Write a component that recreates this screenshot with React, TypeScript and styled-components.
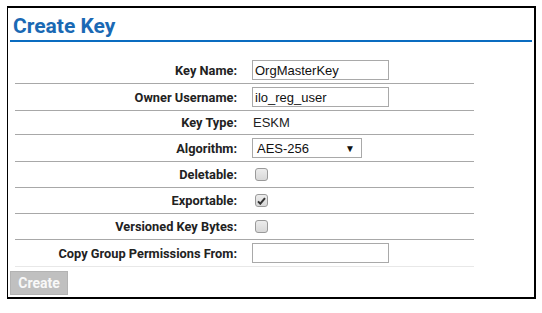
import styled, { createGlobalStyle } from 'styled-components'

const GlobalStyle = createGlobalStyle`
  html, body {
    margin: 0;
    padding: 0;
    background: #fff;
  }
  body {
    font-family: Roboto, "Liberation Sans", Arial, sans-serif;
  }
`

type FieldKind = 'text' | 'input' | 'select' | 'checkbox'

interface Field {
  label: string
  kind: FieldKind
  value?: string
  checked?: boolean
}

const FIELDS: Field[] = [
  { label: 'Key Name:', kind: 'input', value: 'OrgMasterKey' },
  { label: 'Owner Username:', kind: 'input', value: 'ilo_reg_user' },
  { label: 'Key Type:', kind: 'text', value: 'ESKM' },
  { label: 'Algorithm:', kind: 'select', value: 'AES-256' },
  { label: 'Deletable:', kind: 'checkbox', checked: false },
  { label: 'Exportable:', kind: 'checkbox', checked: true },
  { label: 'Versioned Key Bytes:', kind: 'checkbox', checked: false },
  { label: 'Copy Group Permissions From:', kind: 'input', value: '' },
]

export default function App() {
  const renderValue = (field: Field) => {
    switch (field.kind) {
      case 'input':
        return <TextInput type="text" defaultValue={field.value} />
      case 'select':
        return (
          <SelectBox>
            <span>{field.value}</span>
            <SelectArrow>▼</SelectArrow>
          </SelectBox>
        )
      case 'checkbox':
        return (
          <CheckBox $checked={!!field.checked}>
            {field.checked && (
              <svg width="9" height="8" viewBox="0 0 9 8">
                <path d="M1 4.4 L3.3 6.7 L8 1.2" fill="none" stroke="#333" strokeWidth="2" />
              </svg>
            )}
          </CheckBox>
        )
      default:
        return <PlainValue>{field.value}</PlainValue>
    }
  }

  return (
    <>
      <GlobalStyle />
      <Panel>
        <Title>Create Key</Title>
        <FormTable>
          {FIELDS.map((field, i) => (
            <Row key={field.label} $last={i === FIELDS.length - 1}>
              <Label>{field.label}</Label>
              <Value>{renderValue(field)}</Value>
            </Row>
          ))}
        </FormTable>
        <CreateButton disabled>Create</CreateButton>
      </Panel>
    </>
  )
}

const Panel = styled.div`
  margin: 6px 0 0 7px;
  width: 522px;
  border: 2px solid #000;
  border-left-width: 1px;
  padding: 0 2px 2px 2px;
  box-sizing: content-box;
`

const Title = styled.h1`
  margin: 0;
  padding: 5px 3px 1px;
  font-family: Roboto, "Liberation Sans", sans-serif;
  font-size: 21px;
  line-height: 26px;
  font-weight: 700;
  color: #1a69b4;
  border-bottom: 2px solid #0a6cc0;
`

const FormTable = styled.div`
  margin: 15px 0 0 5px;
  width: 459px;
  display: flex;
  flex-direction: column;
`

const Row = styled.div<{ $last: boolean }>`
  display: grid;
  grid-template-columns: 230px 1fr;
  align-items: center;
  padding: 3px 0;
  border-bottom: 1px solid ${(p) => (p.$last ? '#e8e8e8' : '#a8a8a8')};
`

const Label = styled.div`
  text-align: right;
  padding-right: 8px;
  font-size: 12.8px;
  line-height: 17px;
  font-weight: 700;
  color: #222;
`

const Value = styled.div`
  display: flex;
  align-items: center;
  padding-left: 7px;
  min-height: 17px;
`

const PlainValue = styled.span`
  font-family: "Liberation Sans", Arial, sans-serif;
  font-size: 13px;
  line-height: 17px;
  color: #222;
  padding-left: 1px;
`

const TextInput = styled.input`
  box-sizing: border-box;
  width: 137px;
  height: 20px;
  margin: 0;
  padding: 0 2px;
  border: 1px solid #a9a9a9;
  font-family: "Liberation Sans", Arial, sans-serif;
  font-size: 13px;
  color: #111;
  outline: none;
`

const SelectBox = styled.div`
  box-sizing: border-box;
  width: 110px;
  height: 20px;
  display: flex;
  align-items: center;
  justify-content: space-between;
  padding: 0 6px 0 4px;
  border: 1px solid #a9a9a9;
  font-family: "Liberation Sans", Arial, sans-serif;
  font-size: 13px;
  color: #111;
`

const SelectArrow = styled.span`
  font-size: 10px;
  color: #111;
`

const CheckBox = styled.span<{ $checked: boolean }>`
  box-sizing: border-box;
  width: 13px;
  height: 13px;
  margin: 3px 0 3px 3px;
  border: 1px solid #9a9a9a;
  border-radius: 3px;
  background: linear-gradient(#ececec, #d8d8d8);
  display: flex;
  align-items: center;
  justify-content: center;
`

const CreateButton = styled.button`
  display: block;
  margin-top: 4px;
  width: 58px;
  height: 24px;
  padding: 0;
  border: 1px solid #b3b3b3;
  background: #c0c0c0;
  color: #f8f8f8;
  font-family: Roboto, "Liberation Sans", sans-serif;
  font-size: 14px;
  font-weight: 700;
`
